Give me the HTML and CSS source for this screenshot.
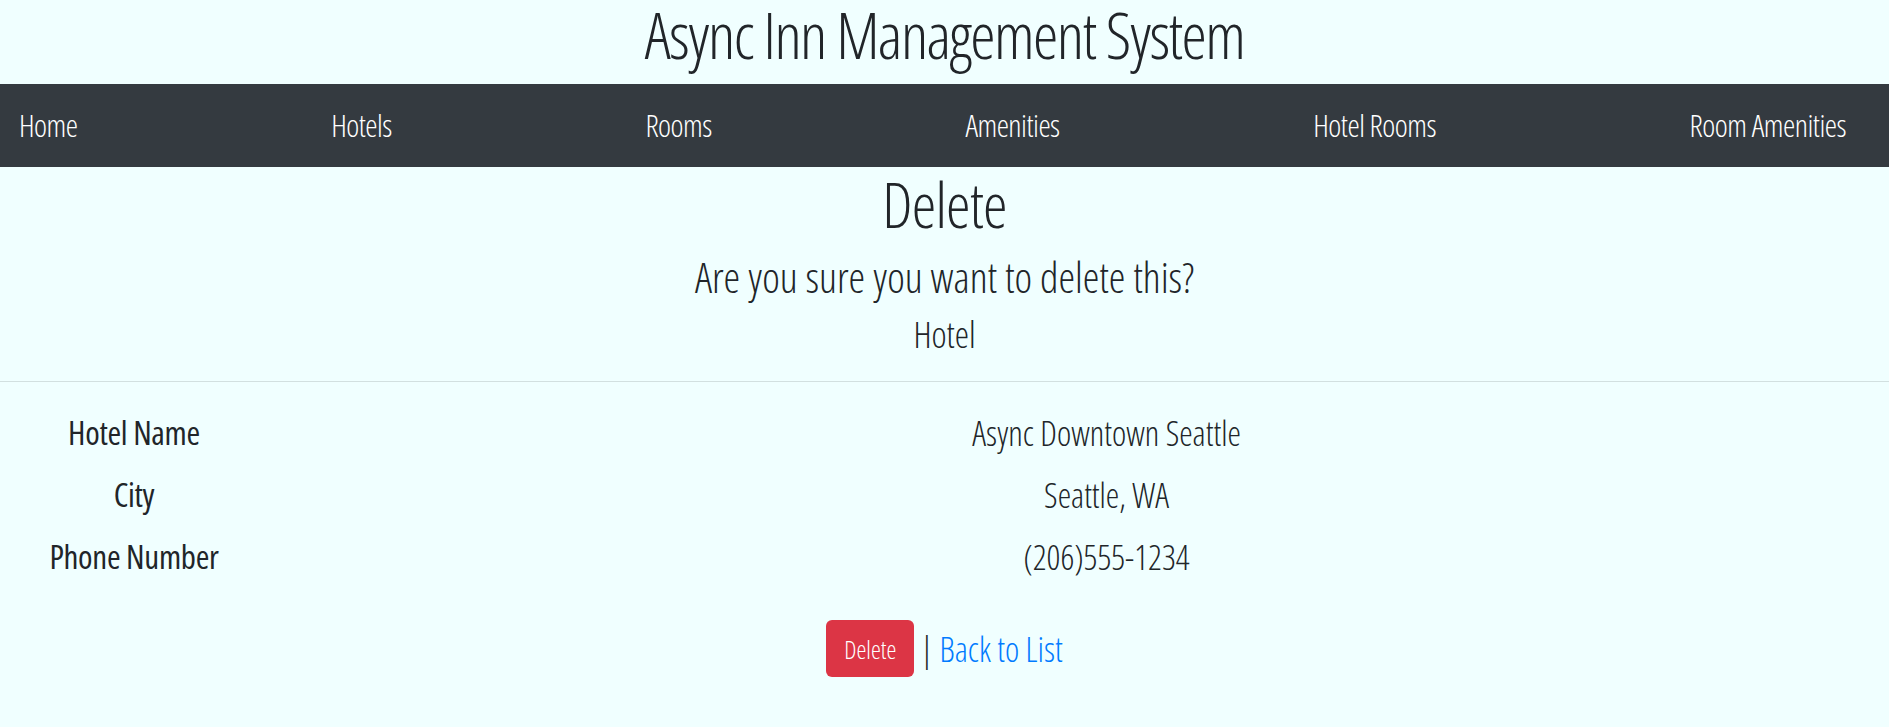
FILE: index.html
```html
<!DOCTYPE html>
<html lang="en">
<head>
<meta charset="utf-8">
<title>Delete - Async Inn</title>
<link rel="stylesheet" href="styles.css">
</head>
<body>
<header class="site-header">
  <h1 class="site-title">Async Inn Management System</h1>
  <nav class="main-nav">
    <a href="#">Home</a>
    <a href="#">Hotels</a>
    <a href="#">Rooms</a>
    <a href="#">Amenities</a>
    <a href="#">Hotel Rooms</a>
    <a href="#">Room Amenities</a>
  </nav>
</header>
<main class="content">
  <h2 class="page-title">Delete</h2>
  <h3 class="confirm">Are you sure you want to delete this?</h3>
  <h4 class="entity">Hotel</h4>
  <hr class="divider">
  <dl class="details">
    <dt>Hotel Name</dt>
    <dd>Async Downtown Seattle</dd>
    <dt>City</dt>
    <dd>Seattle, WA</dd>
    <dt>Phone Number</dt>
    <dd>(206)555-1234</dd>
  </dl>
  <form class="actions">
    <button type="button" class="btn-delete">Delete</button>
    <span class="sep">|</span>
    <a href="#" class="back-link">Back to List</a>
  </form>
</main>
</body>
</html>
```

FILE: styles.css
```css
html, body {
  margin: 0;
  padding: 0;
}
body {
  background: #f0ffff;
  color: #212529;
  font-family: "Open Sans", "Liberation Sans", sans-serif;
  font-stretch: condensed;
  font-weight: 300;
}
.site-title {
  margin: 0;
  height: 84px;
  font-size: 64px;
  line-height: 70px;
  letter-spacing: -1.6px;
  font-weight: 300;
  text-align: center;
  color: #212529;
}
.main-nav {
  display: flex;
  justify-content: space-between;
  align-items: center;
  height: 83px;
  background: #343a40;
  padding: 0 43px 0 19px;
}
.main-nav a {
  color: #fff;
  text-decoration: none;
  font-size: 31px;
  letter-spacing: -0.5px;
  line-height: 83px;
}
.content {
  text-align: center;
}
.page-title {
  margin: 0;
  font-size: 62px;
  letter-spacing: -0.8px;
  font-weight: 300;
  line-height: 74px;
}
.confirm {
  margin: 0;
  font-size: 42px;
  font-weight: 300;
  line-height: 72px;
}
.entity {
  margin: 0;
  font-size: 36px;
  font-weight: 300;
  line-height: 44px;
}
.divider {
  margin: 24px 0 0;
  border: 0;
  border-top: 1px solid rgba(0, 0, 0, 0.12);
}
.details {
  display: grid;
  grid-template-columns: 268px 1fr;
  margin: 20px 0 0;
}
.details dt {
  font-size: 33px;
  letter-spacing: -0.3px;
  font-weight: 500;
  line-height: 62px;
}
.details dd {
  margin: 0;
  padding-left: 56px;
  font-size: 34px;
  font-weight: 300;
  line-height: 62px;
}
.actions {
  display: flex;
  justify-content: center;
  align-items: center;
  gap: 6px;
  margin-top: 32px;
}
.btn-delete {
  width: 88px;
  height: 57px;
  background: #dc3545;
  color: #fff;
  border: 0;
  border-radius: 6px;
  font-family: inherit;
  font-stretch: condensed;
  font-weight: 300;
  font-size: 25px;
  padding: 0;
}
.sep {
  font-size: 34px;
  color: #212529;
}
.back-link {
  font-size: 34px;
  color: #007bff;
  text-decoration: none;
}
```
